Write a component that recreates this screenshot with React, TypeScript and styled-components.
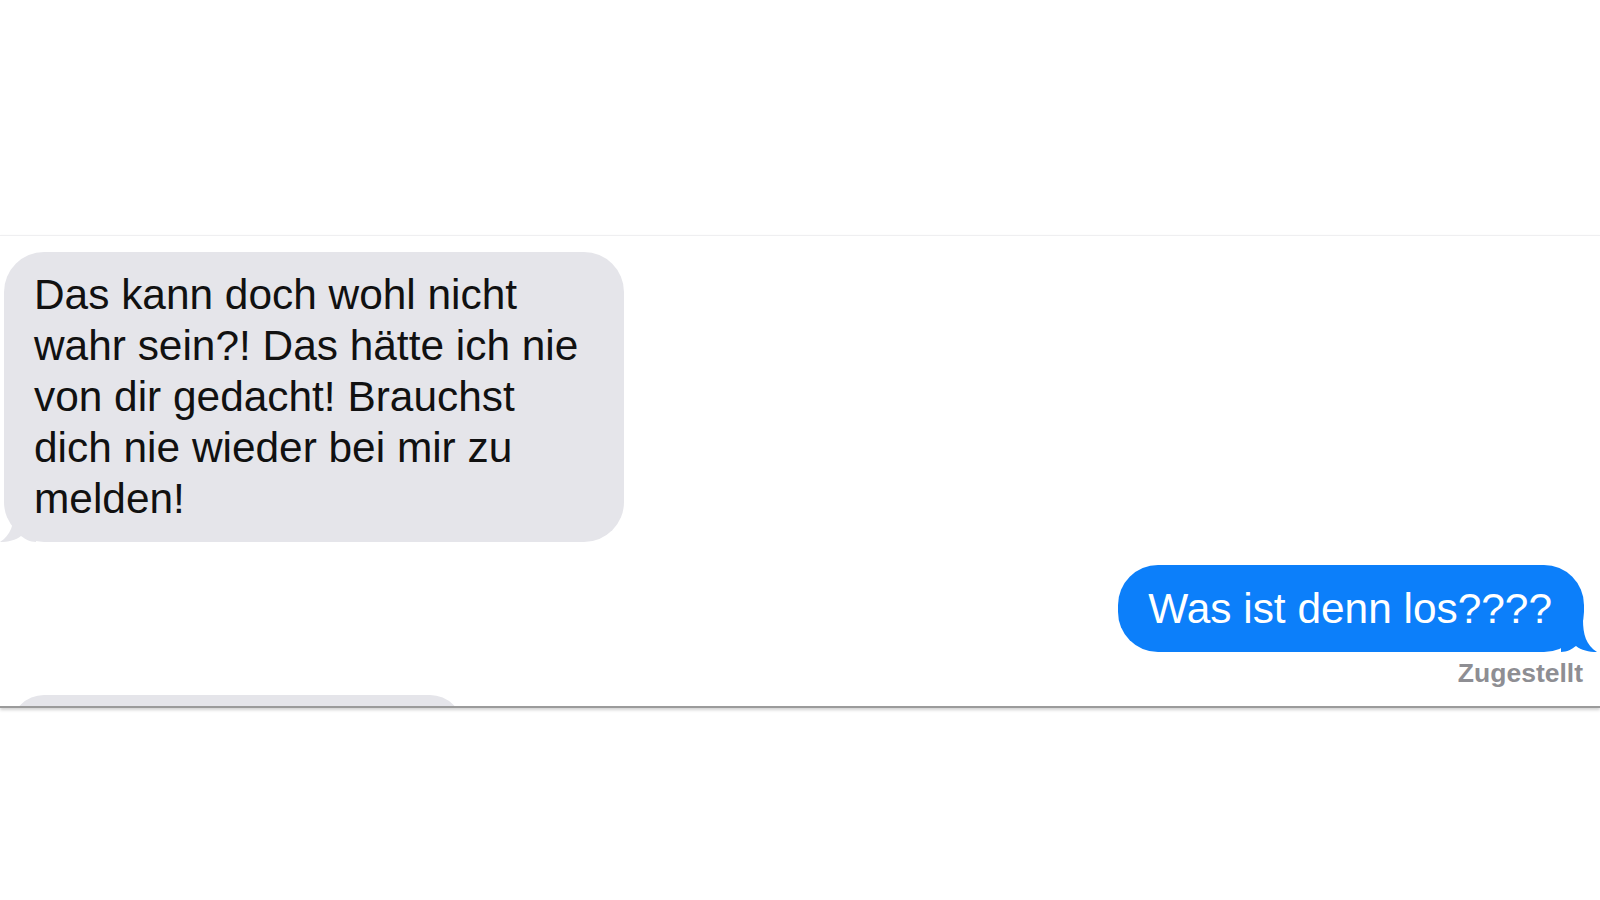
import React from 'react';
import styled, { createGlobalStyle } from 'styled-components';

const GlobalStyle = createGlobalStyle`
	html, body {
		margin: 0;
		padding: 0;
		background: #fff;
	}
	body {
		font-family: "Liberation Sans", Arial, Helvetica, sans-serif;
		-webkit-font-smoothing: antialiased;
	}
`;

const Page = styled.div`
	width: 1600px;
	height: 900px;
	padding-top: 235px;
	box-sizing: border-box;
`;

const Thread = styled.div`
	height: 473px;
	box-sizing: border-box;
	border-top: 1px solid #efeff1;
	border-bottom: 2px solid #9b9b9b;
	box-shadow: 0 2px 3px rgba(0, 0, 0, 0.18);
	padding-top: 16px;
	overflow: hidden;
	display: flex;
	flex-direction: column;
`;

const Row = styled.div<{ $mine?: boolean }>`
	flex-shrink: 0;
	display: flex;
	flex-direction: column;
	align-items: ${(p) => (p.$mine ? 'flex-end' : 'flex-start')};
	padding: ${(p) => (p.$mine ? '0 16px 0 0' : '0 0 0 4px')};
	margin-top: ${(p) => (p.$mine ? '23px' : '0')};
`;

const Bubble = styled.div<{ $mine?: boolean }>`
	position: relative;
	box-sizing: border-box;
	border-radius: 40px;
	font-size: 42.4px;
	line-height: 51px;
	letter-spacing: 0;
	white-space: pre-line;
	background: ${(p) => (p.$mine ? '#0c7ffa' : '#e5e5ea')};
	color: ${(p) => (p.$mine ? '#fff' : '#111')};
	padding: ${(p) => (p.$mine ? '18px 32px 18px 30px' : '17px 46px 18px 30px')};
`;

const Tail = styled.svg<{ $mine?: boolean }>`
	position: absolute;
	bottom: 0;
	width: 36px;
	height: 32px;
	${(p) => (p.$mine ? 'right: -13px;' : 'left: -4px; transform: scaleX(-1);')}
`;

const Status = styled.div`
	margin-top: 6px;
	margin-right: 1px;
	font-size: 26.5px;
	line-height: 30px;
	font-weight: 700;
	color: #8e8e93;
`;

// next incoming bubble, cut off by the bottom edge of the thread
const Peek = styled.div`
	flex-shrink: 0;
	margin: 7px 0 0 11px;
	width: 452px;
	height: 80px;
	border-radius: 33px;
	background: #e5e5ea;
`;

// tail shape for the bottom-right corner, mirrored for incoming bubbles
const BubbleTail = ({ mine, color }: { mine?: boolean; color: string }) => (
	<Tail $mine={mine} viewBox="0 0 36 32">
		<path
			d="M0 0 L22 0 C22 14 25 25 36 32 C28 32 20 30 15 26 C11 29 6 32 0 32 Z"
			fill={color}
		/>
	</Tail>
);

const App = () => {
	return (
		<>
			<GlobalStyle />
			<Page>
				<Thread>
					<Row>
						<Bubble>
							<BubbleTail color="#e5e5ea" />
							{'Das kann doch wohl nicht\nwahr sein?! Das hätte ich nie\nvon dir gedacht! Brauchst\ndich nie wieder bei mir zu\nmelden!'}
						</Bubble>
					</Row>
					<Row $mine>
						<Bubble $mine>
							<BubbleTail mine color="#0c7ffa" />
							Was ist denn los????
						</Bubble>
						<Status>Zugestellt</Status>
					</Row>
					<Peek />
				</Thread>
			</Page>
		</>
	);
};

export default App;
